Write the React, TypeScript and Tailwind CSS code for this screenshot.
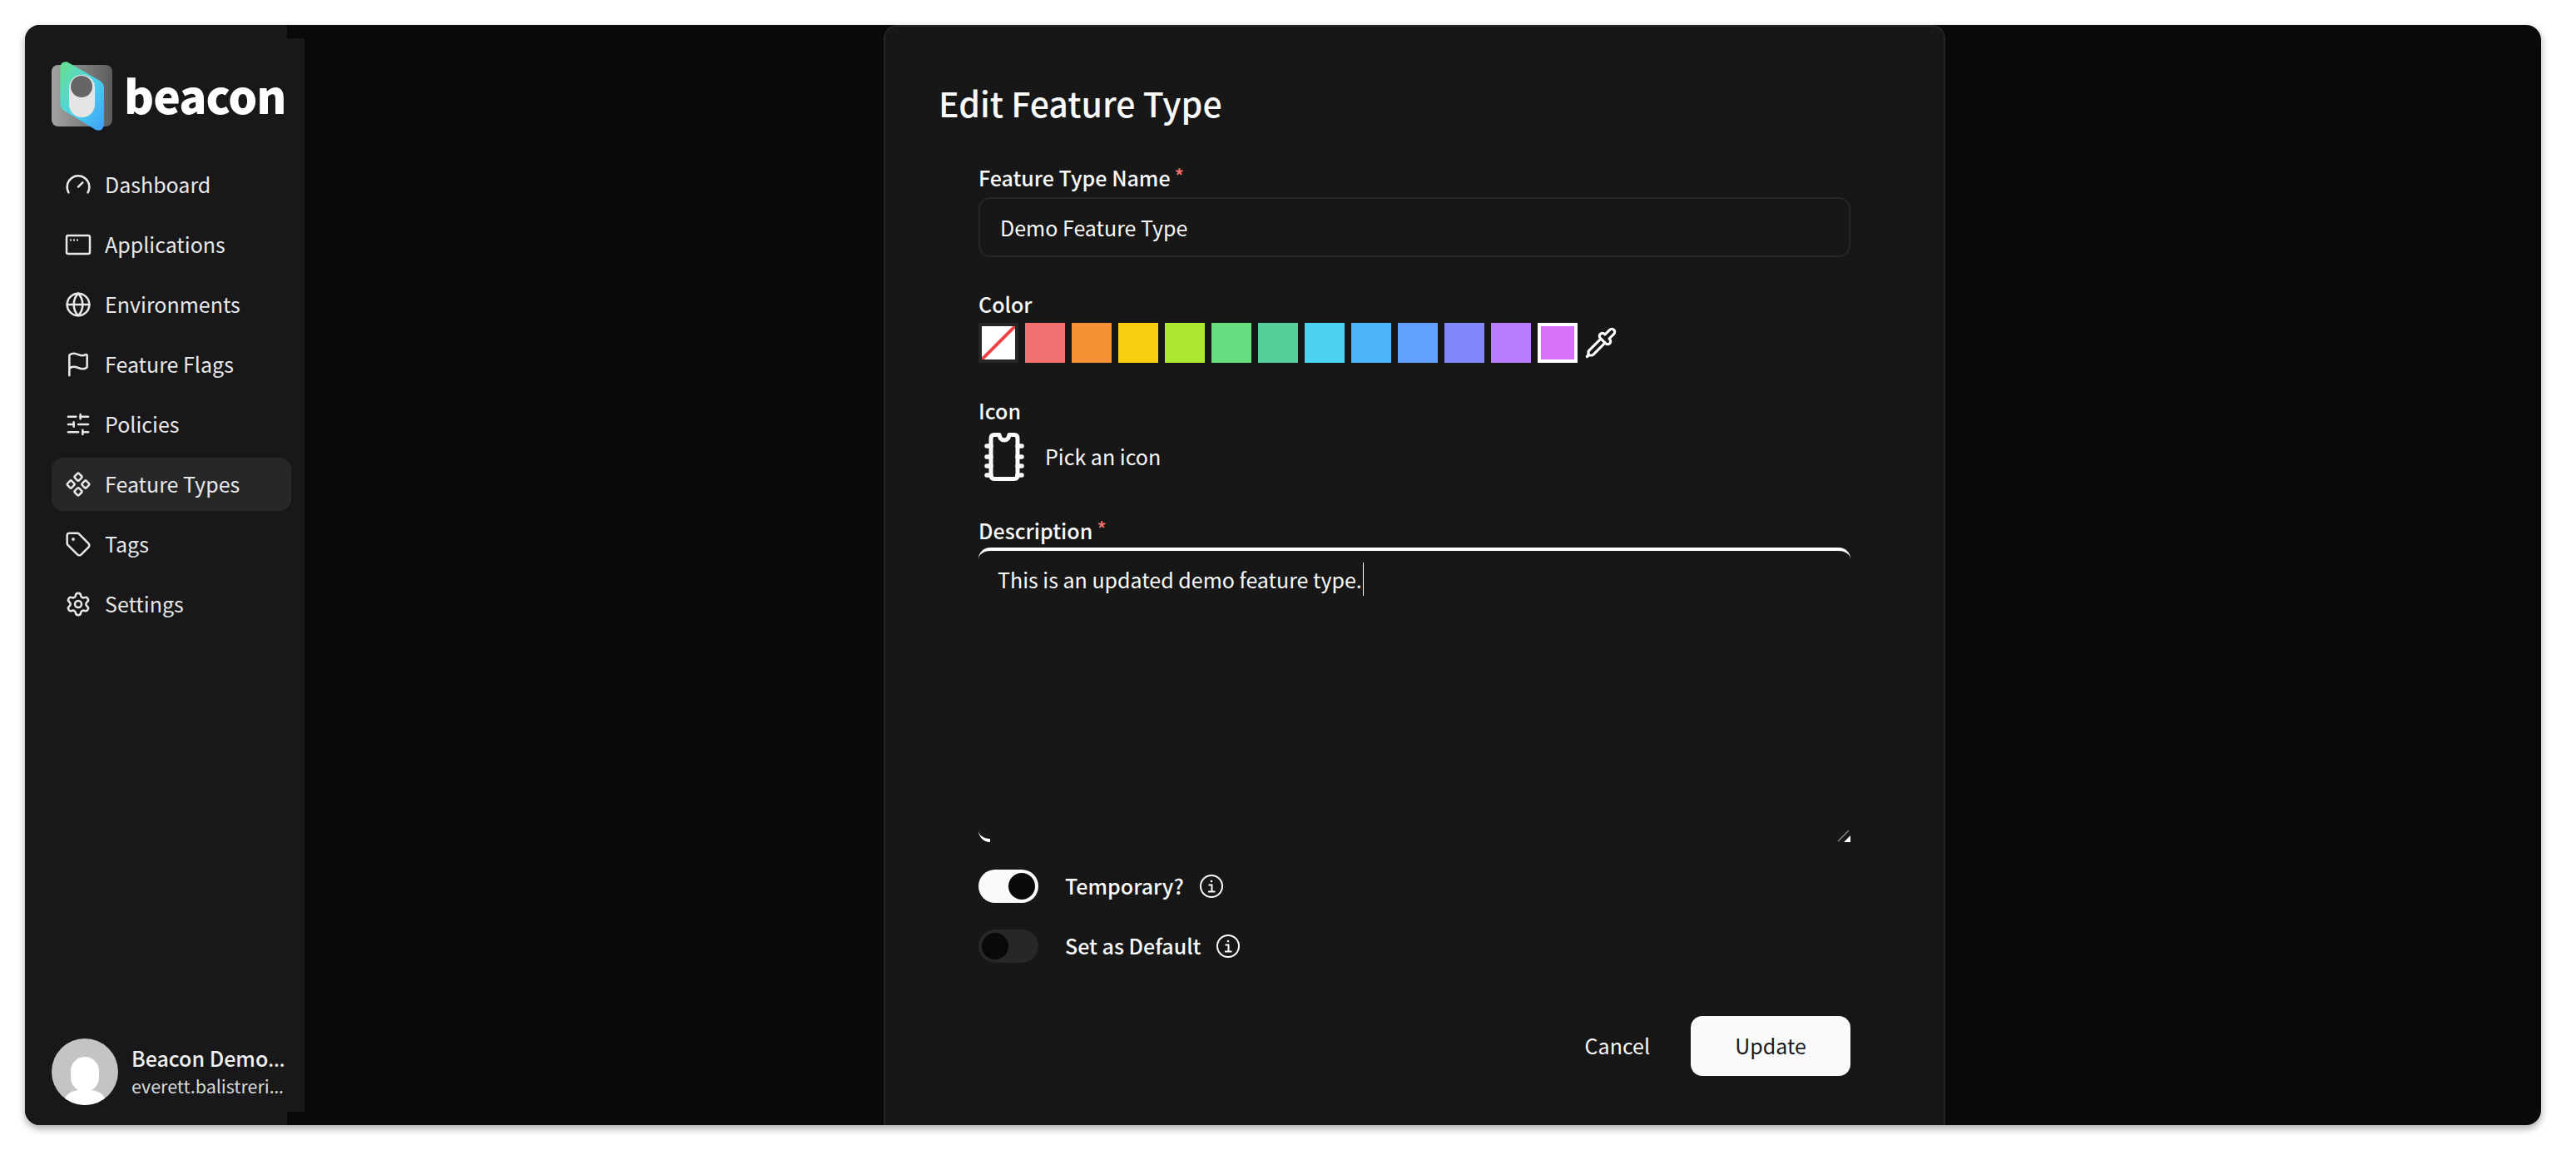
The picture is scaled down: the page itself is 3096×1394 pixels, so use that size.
import { Component, Flag, Gauge, Globe, Pipette, Settings, SlidersHorizontal, Tag } from 'lucide-react';
import type { ReactNode } from 'react';

// Feature type editor page: sidebar on the left, modal clipped by the window on the right.

function BrowserIcon() {
  return (
    <svg width="32" height="32" viewBox="0 0 32 32" fill="none" stroke="currentColor" strokeWidth="2.500">
      <rect x="2" y="5" width="28" height="22" rx="2" />
      <path d="M6 10.500h2M10 10.500h2M14 10.500h2" strokeWidth="2" />
    </svg>
  );
}

function LogoMark() {
  return (
    <svg width="74" height="85" viewBox="0 0 74 85" className="shrink-0">
      <defs>
        <linearGradient id="logoBack" x1="0" y1="0" x2="1" y2="0">
          <stop offset="0" stopColor="#a3a3a3" />
          <stop offset="1" stopColor="#5c5c5c" />
        </linearGradient>
        <linearGradient id="logoFront" x1="0" y1="0" x2="1" y2="1">
          <stop offset="0" stopColor="#67e08a" />
          <stop offset="0.5" stopColor="#4dd4e8" />
          <stop offset="1" stopColor="#3f9ffb" />
        </linearGradient>
      </defs>
      <rect x="0" y="5" width="73" height="74" rx="8" fill="url(#logoBack)" />
      <path
        d="M10.500 8Q11 0 19 1.500L58 24Q63 27 63 33V76Q62 86 53 83L15 60Q10.500 57 10.500 51Z"
        fill="url(#logoFront)"
      />
      <rect x="21" y="17" width="31" height="51" rx="15.500" fill="#e5e5e5" />
      <circle cx="36" cy="31" r="14" fill="#e5e5e5" />
      <circle cx="36" cy="31" r="13" fill="#666666" />
    </svg>
  );
}

function ChipIcon() {
  return (
    <svg width="48" height="58" viewBox="0 0 48 58" fill="none" stroke="#fafafa" strokeWidth="5" strokeLinecap="round">
      <path d="M12 2.500H18Q19 9 24 9T30 2.500H36Q40 2.500 40 7V51Q40 55.500 36 55.500H12Q8 55.500 8 51V7Q8 2.500 12 2.500Z" strokeLinejoin="round" />
      <path d="M3 16H8M3 29H8M3 40H8M3 51H8M40 16H45M40 29H45M40 40H45M40 51H45" strokeWidth="5.500" />
    </svg>
  );
}

function InfoIcon() {
  return (
    <svg width="28" height="28" viewBox="0 0 28 28" fill="none" stroke="#fafafa" strokeWidth="2">
      <circle cx="14" cy="14" r="13" />
      <path d="M10.500 12.500H14.500V20M10 20.500H18.500" />
      <circle cx="14" cy="8" r="1.300" fill="#fafafa" stroke="none" />
    </svg>
  );
}

const navItems: { label: string; icon: ReactNode; active?: boolean }[] = [
  { label: 'Dashboard', icon: <Gauge size={32} strokeWidth={1.9} /> },
  { label: 'Applications', icon: <BrowserIcon /> },
  { label: 'Environments', icon: <Globe size={32} strokeWidth={1.9} /> },
  { label: 'Feature Flags', icon: <Flag size={32} strokeWidth={1.9} /> },
  { label: 'Policies', icon: <SlidersHorizontal size={32} strokeWidth={1.9} /> },
  { label: 'Feature Types', icon: <Component size={32} strokeWidth={1.9} />, active: true },
  { label: 'Tags', icon: <Tag size={32} strokeWidth={1.9} /> },
  { label: 'Settings', icon: <Settings size={32} strokeWidth={1.9} /> },
];

const swatches = [
  'bg-[#f07070]',
  'bg-[#f59035]',
  'bg-[#f7ce10]',
  'bg-[#aee835]',
  'bg-[#68de80]',
  'bg-[#55d098]',
  'bg-[#4dd3f0]',
  'bg-[#4db5fc]',
  'bg-[#60a0ff]',
  'bg-[#8088fb]',
  'bg-[#b87cfc]',
];

function Sidebar() {
  return (
    <aside className="relative flex w-[336px] shrink-0 flex-col bg-[#18181b] pb-[24px] pl-[32px] pr-[16px]">
      <div className="absolute right-0 top-0 h-[16px] w-[21px] bg-[#09090b]" />
      <div className="absolute bottom-0 right-0 h-[16px] w-[21px] bg-[#09090b]" />

      <div className="mt-[43px] flex items-center gap-[13px]">
        <LogoMark />
        <span className="relative top-[-2px] text-[55px] font-black leading-[85px] tracking-[-1px] text-white">beacon</span>
      </div>

      <nav className="mt-[32px] flex flex-col gap-[8px]">
        {navItems.map((item) => (
          <div
            key={item.label}
            className={`flex h-[64px] items-center gap-[16px] rounded-[14px] px-[16px] text-[25px] text-[#e8e8e8] ${
              item.active ? 'bg-[#27272a]' : ''
            }`}
          >
            {item.icon}
            <span>{item.label}</span>
          </div>
        ))}
      </nav>

      <div className="mt-auto flex items-center gap-[16px]">
        <div className="relative h-[80px] w-[80px] shrink-0 overflow-hidden rounded-full bg-[#c4c4c4]">
          <div className="absolute left-[23px] top-[22px] h-[42px] w-[34px] rounded-full bg-white" />
          <div className="absolute left-[13px] top-[62px] h-[40px] w-[54px] rounded-full bg-white" />
        </div>
        <div className="min-w-0 flex-1 whitespace-nowrap">
          <div className="text-[25px] font-medium leading-[34px] text-[#f0f0f0]">
            Beacon Demo<span className="font-['Noto_Sans']">…</span>
          </div>
          <div className="text-[21.500px] leading-[32px] text-[#d8d8d8]">
            everett.balistreri<span className="font-['Noto_Sans']">…</span>
          </div>
        </div>
      </div>
    </aside>
  );
}

function Label({ children, required }: { children: ReactNode; required?: boolean }) {
  return (
    <div className="text-[25px] font-medium leading-[36px] text-[#fafafa]">
      {children}
      {required && <span className="relative top-[-3px] ml-[5px] text-[24px] text-[#f07070]">*</span>}
    </div>
  );
}

function Toggle({ on }: { on?: boolean }) {
  return (
    <div
      className={`flex h-[40px] w-[72px] items-center rounded-full px-[4px] ${
        on ? 'justify-end bg-[#fafafa]' : 'justify-start bg-[#27272a]'
      }`}
    >
      <div className="h-[32px] w-[32px] rounded-full bg-[#09090b]" />
    </div>
  );
}

function EditModal() {
  return (
    <section className="ml-[696px] h-[1340px] w-[1276px] shrink-0 rounded-t-[16px] border-x-2 border-t-2 border-[#27272a] bg-[#171717]">
      <h2 className="ml-[64px] mt-[59px] text-[41px] font-medium leading-[64px] text-[#fafafa]">Edit Feature Type</h2>

      <form className="ml-[112px] mt-[40px] w-[1048px]">
        <Label required>Feature Type Name</Label>
        <input
          readOnly
          defaultValue="Demo Feature Type"
          className="mt-[5px] h-[72px] w-full rounded-[14px] border-2 border-[#27272a] bg-transparent px-[24px] text-[25px] text-[#fafafa] outline-none"
        />

        <div className="mt-[38px]">
          <Label>Color</Label>
        </div>
        <div className="mt-[5px] flex items-center gap-[8px]">
          <div className="relative h-[48px] w-[48px] overflow-hidden border-4 border-[#27272a] bg-white">
            <svg className="h-full w-full" viewBox="0 0 40 40">
              <path d="M0 40L40 0" stroke="#ef4444" strokeWidth="4" />
            </svg>
          </div>
          {swatches.map((color) => (
            <div key={color} className={`h-[48px] w-[48px] ${color}`} />
          ))}
          <div className="h-[48px] w-[48px] border-4 border-white bg-[#d970f8]" />
          <Pipette size={40} strokeWidth={1.9} className="text-white" />
        </div>

        <div className="mt-[39px]">
          <Label>Icon</Label>
        </div>
        <div className="mt-[9px] flex items-center gap-[25px] pl-[7px]">
          <ChipIcon />
          <span className="text-[25px] text-[#fafafa]">Pick an icon</span>
        </div>

        <div className="mt-[41px]">
          <Label required>Description</Label>
        </div>
        <div className="relative mt-[2px] h-[354px] w-full rounded-[14px] border-t-4 border-white px-[23px] pt-[14px]">
          <div className="flex h-[40px] items-center text-[25px] leading-[40px] text-[#fafafa]">
            This is an updated demo feature type.
            <span className="ml-[1px] h-[40px] w-[1px] bg-white" />
          </div>
          <div className="absolute bottom-0 left-0 h-[14px] w-[14px] rounded-bl-[14px] border-b-4 border-white" />
          <svg className="absolute bottom-0 right-0" width="16" height="16" viewBox="0 0 16 16">
            <path d="M8 16L16 8V16Z" fill="#ffffff" />
            <path d="M1 15L14 2" stroke="#8a8a8a" strokeWidth="1.500" />
          </svg>
        </div>

        <div className="mt-[33px] flex h-[40px] items-center">
          <Toggle on />
          <span className="ml-[32px] text-[25px] font-medium text-[#fafafa]">Temporary?</span>
          <span className="ml-[19px] flex">
            <InfoIcon />
          </span>
        </div>
        <div className="mt-[32px] flex h-[40px] items-center">
          <Toggle />
          <span className="ml-[32px] text-[25px] font-medium text-[#fafafa]">Set as Default</span>
          <span className="ml-[19px] flex">
            <InfoIcon />
          </span>
        </div>

        <div className="mt-[64px] flex items-center justify-end">
          <span className="mr-[49px] text-[25px] text-[#fafafa]">Cancel</span>
          <button
            type="button"
            className="h-[72px] w-[192px] rounded-[14px] bg-[#fafafa] text-[25px] text-[#18181b]"
          >
            Update
          </button>
        </div>
      </form>
    </section>
  );
}

export default function App() {
  return (
    <div className="h-[1394px] w-[3096px] overflow-hidden bg-white pb-[42px] pl-[30px] pr-[42px] pt-[30px] font-['Noto_Sans_CJK_JP','Noto_Sans',sans-serif]">
      <div className="flex h-full overflow-hidden rounded-[18px] bg-[#09090b] shadow-[0_4px_10px_rgba(0,0,0,0.35)]">
        <Sidebar />
        <EditModal />
      </div>
    </div>
  );
}
